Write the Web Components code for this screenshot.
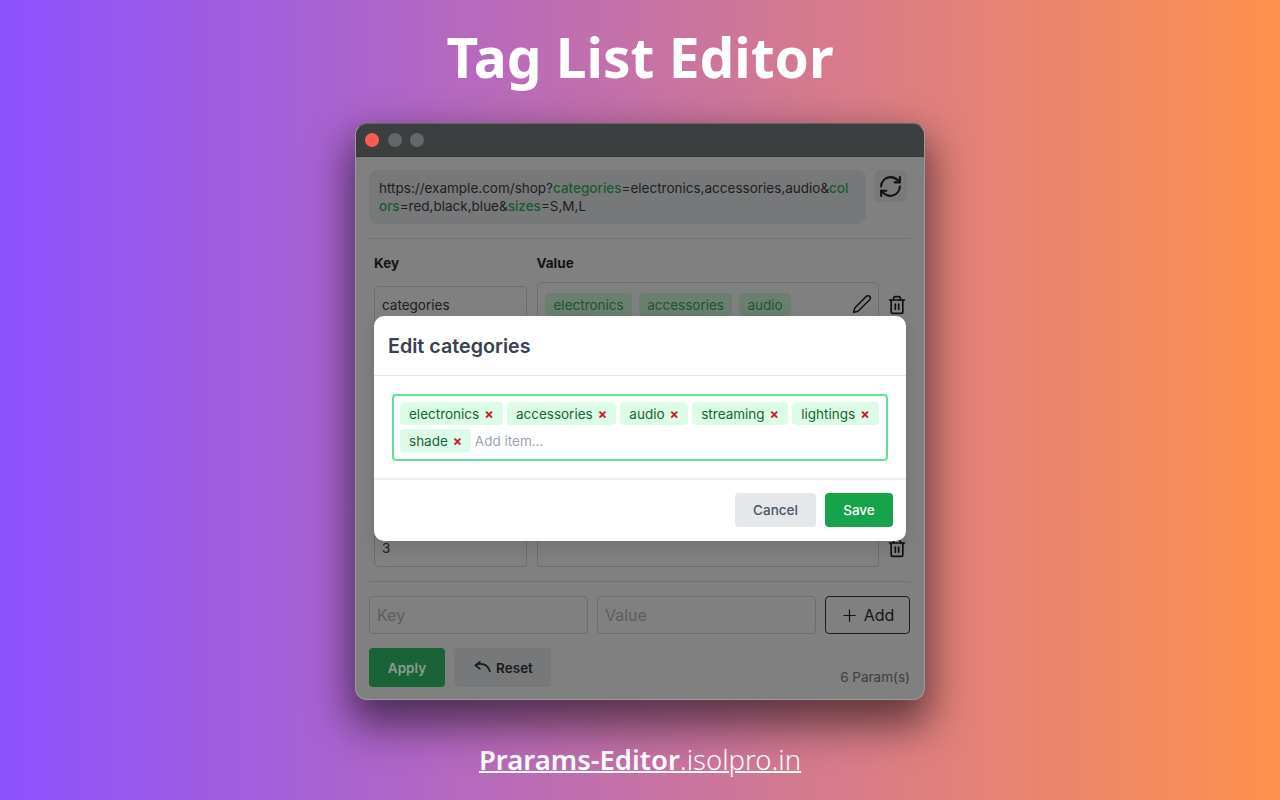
<!DOCTYPE html>
<html lang="en"><head><meta charset="utf-8"><title>Tag List Editor</title>
<style>
html,body{margin:0;padding:0;height:800px;overflow:hidden}
body{font-family:Inter,"Liberation Sans",sans-serif}
u b{font-weight:600}
</style></head><body>
<promo-page>
  <span slot="title">Tag List Editor</span>
  <app-window></app-window>
  <u slot="footer"><b>Prarams-Editor</b><span>.isolpro.in</span></u>
</promo-page>
<script>
const ICONS={
 refresh:'<path d="M3 12a9 9 0 0 1 9-9 9.75 9.75 0 0 1 6.74 2.74L21 8"/><path d="M21 3v5h-5"/><path d="M21 12a9 9 0 0 1-9 9 9.75 9.75 0 0 1-6.74-2.74L3 16"/><path d="M8 16H3v5"/>',
 pencil:'<path d="M21.174 6.812a1 1 0 0 0-3.986-3.987L3.842 16.174a2 2 0 0 0-.5.83l-1.321 4.352a.5.5 0 0 0 .623.622l4.353-1.32a2 2 0 0 0 .83-.497z"/>',
 trash:'<path d="M3 6h18"/><path d="M19 6v14c0 1-1 2-2 2H7c-1 0-2-1-2-2V6"/><path d="M8 6V4c0-1 1-2 2-2h4c1 0 2 1 2 2v2"/><path d="M10 11v6"/><path d="M14 11v6"/>',
 undo:'<path d="M9 5.500 4 9.500 9 13.500"/><path d="M4 9.500C10 6.500 17.500 7.500 20.500 16.500"/>',
 plus:'<path d="M12 4v16"/><path d="M4 12h16"/>'
};
function def(name,css,html){
  customElements.define(name,class extends HTMLElement{
    constructor(){super();const r=this.attachShadow({mode:'open'});
      r.innerHTML='<style>'+css+'</style>'+(typeof html==='function'?html(this):html);}
  });
}
def('promo-page',`
:host{display:flex;flex-direction:column;align-items:center;width:1280px;height:800px;background:linear-gradient(90deg,#8c52ff 0%,#ff914d 100%);color:#fff;font-family:"Noto Sans",sans-serif}
.t{height:112px;margin-bottom:11px;display:flex;align-items:center;font-size:55px;font-weight:700;line-height:1}
.f{flex:1;display:flex;align-items:center;padding-top:20px;font-size:27.5px;line-height:1;font-weight:300}
::slotted(u){text-decoration-thickness:2px}
`,`<div class="t"><slot name="title"></slot></div><slot></slot><div class="f"><slot name="footer"></slot></div>`);

def('ui-icon',`:host{display:inline-flex}svg{display:block;fill:none;stroke:currentColor;stroke-linecap:round;stroke-linejoin:round}`,
 h=>`<svg viewBox="0 0 24 24" width="${h.getAttribute('size')||20}" height="${h.getAttribute('size')||20}" stroke-width="${h.getAttribute('sw')||2}">${ICONS[h.getAttribute('name')]}</svg>`);

def('tag-chip',`
:host{display:inline-flex;align-items:center;height:23px;padding:0 8.5px 0 var(--pl,9px);border-radius:4px;font-size:13.5px;white-space:nowrap;background:var(--bg);color:var(--fg)}
.x{color:#c81e2e;font-weight:700;margin:0 1px 0 5px;width:9px;text-align:center;font-size:14px;line-height:1}
`,h=>`<slot></slot>${h.hasAttribute('x')?'<span class="x">×</span>':''}`);

def('param-row',`
:host{display:flex;align-items:flex-start;gap:10px;padding-left:5px}
.k{flex:none;box-sizing:border-box;width:153px;height:38px;border:1px solid #6e6e6e;border-radius:4px;padding:0 7px;display:flex;align-items:center;font-size:13.5px;color:#1c1c1c}
.tall .k{margin-top:4px}
.v{flex:none;box-sizing:border-box;width:342px;height:38px;border:1px solid #6e6e6e;border-radius:4px;padding:0 6px 0 7px;display:flex;align-items:flex-start;gap:8px;color:#111}
.tall .v{height:47px;padding-top:10px}
.tags{display:flex;gap:6.500px;flex:1;--pl:8.5px;--bg:#6b7f71;--fg:#1d5431}
.t{flex:none;margin-left:-2px;color:#111;display:flex;margin-top:9px}
.tall .t{margin-top:13px}
.p{color:#111;display:flex;margin-top:1px}
.wrap{display:contents}
`,h=>{const tall=h.hasAttribute('tall');return `<div class="wrap ${tall?'tall':''}"><div class="k"><slot name="key"></slot></div><div class="v"><div class="tags"><slot></slot></div>${tall?'<span class="p"><ui-icon name="pencil" size="20" sw="1.8"></ui-icon></span>':''}</div><span class="t"><ui-icon name="trash" size="20" sw="2"></ui-icon></span></div>`});

def('edit-modal',`
:host{display:block;position:absolute;left:18px;top:192px;width:532px;height:225px;box-sizing:border-box;background:#fff;border-radius:10px;box-shadow:0 6px 16px rgba(0,0,0,.12);font-family:Inter,sans-serif;overflow:hidden}
header{height:60px;box-sizing:border-box;border-bottom:1px solid #e5e7eb;padding:0 14px;display:flex;align-items:center;font-size:19.7px;font-weight:600;color:#374151}
.b{height:104px;box-sizing:border-box;padding:18px 18px 0;border-bottom:2px solid #eeeff1}
.box{box-sizing:border-box;height:67px;border:2px solid #62e093;border-radius:4px;padding:6px 6px 0;display:flex;flex-wrap:wrap;gap:4px 4.2px;align-content:flex-start;--bg:#dcfce7;--fg:#166534}
.ph{font-size:13.5px;color:#9ca3af;display:flex;align-items:center;height:23px;margin-left:-0.7px}
footer{display:flex;justify-content:flex-end;gap:9px;padding:13px 13px 0 0}
.btn{height:34px;border-radius:4px;display:flex;align-items:center;justify-content:center;font-size:13.5px;font-weight:500}
.c{width:81px;background:#e5e7eb;color:#4b5563}
.s{width:68px;background:#16a34a;color:#fff}
`,`<header>Edit categories</header>
<div class="b"><div class="box">
<tag-chip x>electronics</tag-chip><tag-chip x>accessories</tag-chip><tag-chip x>audio</tag-chip><tag-chip x>streaming</tag-chip><tag-chip x>lightings</tag-chip><tag-chip x>shade</tag-chip><span class="ph">Add item...</span>
</div></div>
<footer><div class="btn c">Cancel</div><div class="btn s">Save</div></footer>`);

def('app-window',`
:host{display:block;position:relative;width:570px;height:577px;box-sizing:border-box;border:1px solid #9b9b9b;border-top-color:#666;border-radius:12px;background:#808080;box-shadow:0 20px 40px 6px rgba(0,0,0,.55);color:#1a1a1a;font-family:Inter,sans-serif}
.bar{height:32px;background:#3b3f3f;border-radius:11px 11px 0 0;display:flex;align-items:center;gap:8.500px;padding-left:9px;border-bottom:1px solid #333}
.bar i{width:14px;height:14px;border-radius:50%;background:#62676a}
.bar i:first-child{background:#ff5a52}
.body{padding:13px 14px 0 13px}
.top{display:flex;gap:8px;padding-right:3px;align-items:flex-start}
.url{box-sizing:border-box;flex:1;height:54px;background:#777879;border-radius:8px;padding:9px 15px 9px 10px;font-size:13.5px;line-height:18px;word-break:break-all;color:#1d1d1d}
.url b{font-weight:500;color:#1a5a2e}
.rf{width:33px;height:32px;border-radius:6px;background:#77797a;display:flex;align-items:center;justify-content:center;color:#111}
hr{border:0;height:1px;background:#737373;margin:14px 0 0}
.hd{display:flex;padding:16px 0 0 5px;gap:9.5px;height:27px;font-size:13.5px;font-weight:700;color:#141414;line-height:17px;margin-bottom:0}
.hd span:first-child{width:153px}
.rows{display:flex;flex-direction:column;gap:6px}
.add{display:flex;gap:9px;margin-top:14px}
.in{box-sizing:border-box;width:219px;height:38px;border:1px solid #6e6e6e;border-radius:4px;padding:0 7px;display:flex;align-items:center;font-size:16px;color:#5d5d5d}
.ab{box-sizing:border-box;flex:1;height:38px;border:1px solid #1c1c1c;border-radius:4px;display:flex;align-items:center;justify-content:center;gap:6px;font-size:16px;color:#141414}
.act{display:flex;align-items:flex-end;margin-top:14px;gap:9px}
.ap{width:76px;height:39px;border-radius:4px;background:#1a6336;color:#8a9e90;font-size:13.5px;font-weight:600;display:flex;align-items:center;justify-content:center}
.rs{width:97px;height:39px;border-radius:4px;background:#76787a;color:#1a1a1a;font-size:13.5px;font-weight:600;display:flex;align-items:center;justify-content:center;gap:3px}
.cnt{margin-left:auto;font-size:13.5px;color:#3d3d3d;padding-bottom:2px}
`,`<div class="bar"><i></i><i></i><i></i></div>
<div class="body">
 <div class="top"><div class="url">https://example.com/shop?<b>categories</b>=electronics,accessories,audio&amp;<b>col</b><b>ors</b>=red,black,blue&amp;<b>sizes</b>=S,M,L</div><div class="rf"><ui-icon name="refresh" size="25" sw="2"></ui-icon></div></div>
 <hr>
 <div class="hd"><span>Key</span><span>Value</span></div>
 <div class="rows">
  <param-row tall><span slot="key">categories</span><tag-chip>electronics</tag-chip><tag-chip>accessories</tag-chip><tag-chip>audio</tag-chip></param-row>
  <param-row tall></param-row><param-row tall></param-row><param-row></param-row><param-row></param-row>
  <param-row><span slot="key">3</span></param-row>
 </div>
 <hr>
 <div class="add"><div class="in">Key</div><div class="in">Value</div><div class="ab"><ui-icon name="plus" size="17" sw="1.7"></ui-icon>Add</div></div>
 <div class="act"><div class="ap">Apply</div><div class="rs"><ui-icon name="undo" size="21" sw="2"></ui-icon>Reset</div><div class="cnt">6 Param(s)</div></div>
</div>
<edit-modal></edit-modal>`);
</script>
</body></html>
